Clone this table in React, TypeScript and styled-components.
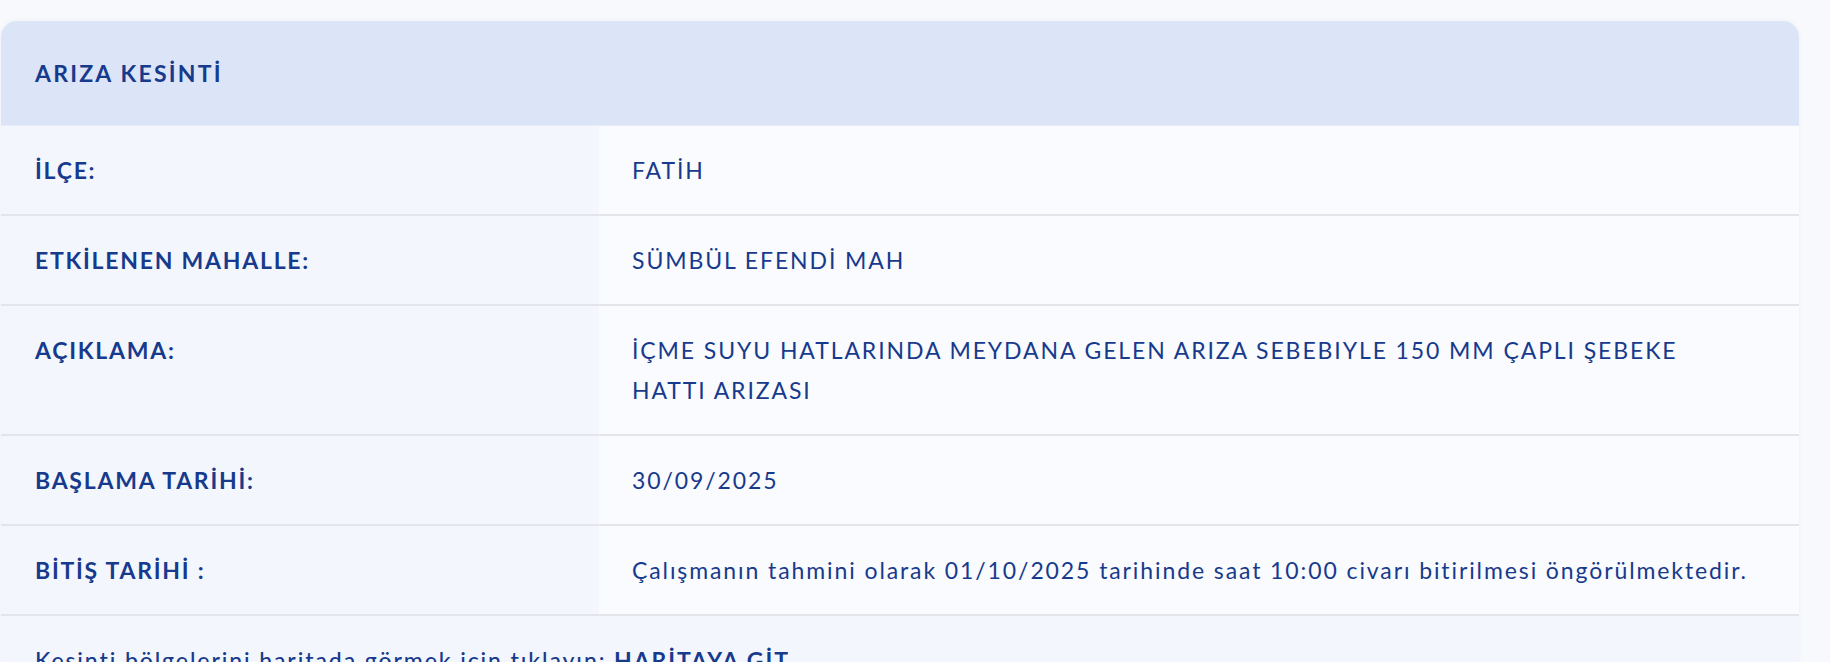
import styled, { createGlobalStyle } from "styled-components";

const GlobalStyle = createGlobalStyle`
  html, body {
    margin: 0;
    padding: 0;
    background: #f8f9fc;
  }
  body {
    font-family: Lato, "Noto Sans", sans-serif;
    color: #173a8c;
  }
`;

interface Row {
  label: string;
  value: string;
}

const rows: Row[] = [
  { label: "İLÇE:", value: "FATİH" },
  { label: "ETKİLENEN MAHALLE:", value: "SÜMBÜL EFENDİ MAH" },
  {
    label: "AÇIKLAMA:",
    value: "İÇME SUYU HATLARINDA MEYDANA GELEN ARIZA SEBEBIYLE 150 MM ÇAPLI ŞEBEKE HATTI ARIZASI",
  },
  { label: "BAŞLAMA TARİHİ:", value: "30/09/2025" },
  {
    label: "BİTİŞ TARİHİ :",
    value: "Çalışmanın tahmini olarak 01/10/2025 tarihinde saat 10:00 civarı bitirilmesi öngörülmektedir.",
  },
];

const App: React.FC = () => {
  return (
    <Page>
      <GlobalStyle />
      <Card>
        <Header>ARIZA KESİNTİ</Header>
        {rows.map(r => (
          <InfoRow key={r.label}>
            <LabelCell>{r.label}</LabelCell>
            <ValueCell>{r.value}</ValueCell>
          </InfoRow>
        ))}
        <MapRow>
          Kesinti bölgelerini haritada görmek için tıklayın: <MapLink href="#">HARİTAYA GİT</MapLink>
        </MapRow>
      </Card>
    </Page>
  );
};

const Page = styled.div`
  padding: 21px 0 0 1px;
`;

const Card = styled.div`
  width: 1798px;
  border-radius: 16px 16px 0 0;
  overflow: hidden;
  box-shadow: 0 -1px 4px rgba(30, 60, 140, 0.04);
  background: #f9fbfe;
`;

const Header = styled.div`
  background: #dce5f7;
  padding: 32px 34px;
  font-size: 23px;
  line-height: 40px;
  letter-spacing: 2.2px;
  font-weight: 700;
  border-bottom: 1px solid #e6ebf5;
`;

const InfoRow = styled.div`
  display: grid;
  grid-template-columns: 598px 1fr;
  border-bottom: 2px solid #e3e5ea;
`;

const Cell = styled.div`
  padding: 24px 32px 24px 34px;
  font-size: 23px;
  line-height: 40px;
  letter-spacing: 1.9px;
`;

const LabelCell = styled(Cell)`
  background: #f3f6fc;
  font-weight: 700;
  letter-spacing: 1.75px;
`;

const ValueCell = styled(Cell)`
  background: #f9fbfe;
  padding-left: 33px;
  padding-right: 47px;
  font-weight: 400;
`;

const MapRow = styled.div`
  background: #f3f6fc;
  padding: 24px 34px;
  font-size: 23px;
  line-height: 40px;
  letter-spacing: 1.9px;
  font-weight: 500;
`;

const MapLink = styled.a`
  color: inherit;
  font-weight: 700;
  text-decoration: none;
`;

export default App;
